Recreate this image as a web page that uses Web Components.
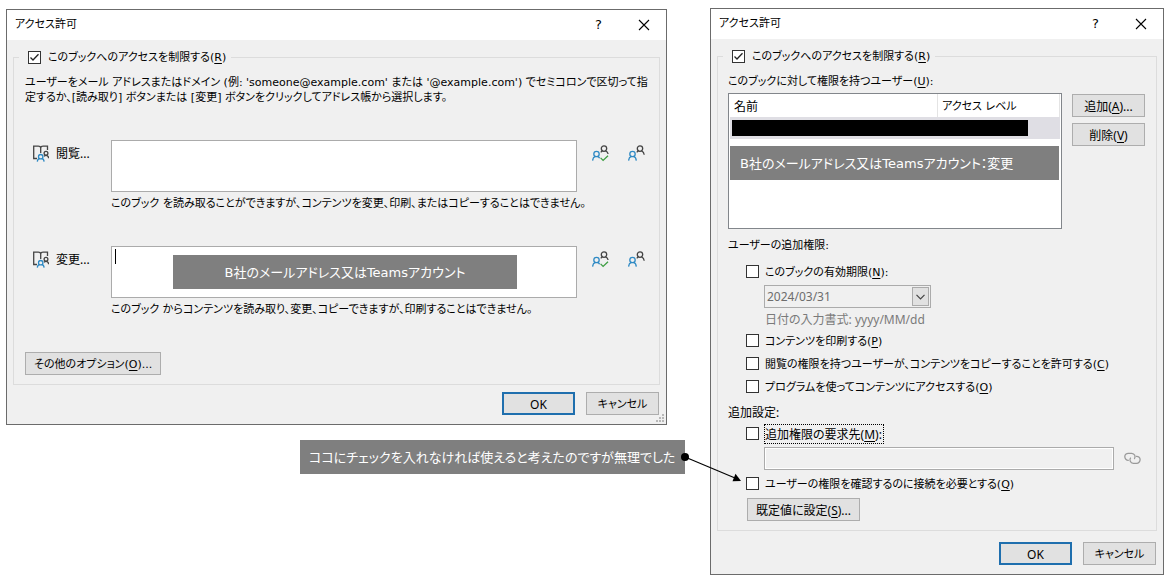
<!DOCTYPE html>
<html lang="ja">
<head>
<meta charset="utf-8">
<title>アクセス許可</title>
<style>
  body {
    margin: 0;
    background: #fff;
    color: #000;
    font: 11px/16px "DejaVu Sans", "Noto Sans CJK JP", sans-serif;
    font-feature-settings: "palt";
  }
</style>
</head>
<body>
<permission-page></permission-page>

<script>
const BASE = `<style>
  * { box-sizing: border-box; }
  u { text-underline-offset: 2px; }
  button, input, textarea, select { font: inherit; font-feature-settings: inherit; color: inherit; margin: 0; border-radius: 0; }
</style>`;

function define(name, markup, setup) {
  const template = document.createElement('template');
  template.innerHTML = BASE + markup;
  customElements.define(name, class extends HTMLElement {
    constructor() {
      super();
      this.attachShadow({ mode: 'open' }).append(template.content.cloneNode(true));
    }
    connectedCallback() {
      if (setup && !this.ready) setup(this, this.shadowRoot);
      this.ready = true;
    }
  });
}

/* Push button */
define('ui-button', `<style>
  :host { display: block; flex: none; }
  :host([primary]) { font: 12px/16px "Noto Sans", "Noto Sans CJK JP", sans-serif; }
  button { display: block; width: 100%; min-width: 73px; height: 23px; padding: 1px 8px 0; border: 1px solid #adadad; background: #e1e1e1; line-height: 21px; white-space: nowrap; text-align: center; }
  :host([primary]) button { border: 2px solid #1f6fae; line-height: 19px; }
</style><button type="button"><slot></slot></button>`);

/* Check box with its label */
define('ui-check', `<style>
  :host { display: flex; align-items: center; height: 23px; }
  :host([slot="legend"]) { height: 18px; }
  input { appearance: none; flex: none; width: 13px; height: 13px; border: 1px solid #333; background: #fff; }
  input:checked { background: #fff url("data:image/svg+xml,%3Csvg xmlns='http://www.w3.org/2000/svg' viewBox='0 0 11 11'%3E%3Cpath d='M1.5 5.5 4 8l5.5-5.7' fill='none' stroke='%23222' stroke-width='1.3'/%3E%3C/svg%3E") center / 11px 11px no-repeat; }
  label { height: 20px; margin-left: 5px; padding-right: 1px; border: 1px dotted transparent; line-height: 20px; white-space: nowrap; }
  :host([focused]) label { border-color: #000; }
  :host([slot="legend"]) label { margin-left: 6px; height: 18px; line-height: 18px; }
</style><input type="checkbox" id="box"><label for="box"><slot></slot></label>`,
(host, root) => { root.querySelector('input').checked = host.hasAttribute('checked'); });

/* Dialog window: title bar, content, footer buttons */
define('ui-dialog', `<style>
  :host { display: block; position: relative; border: 1px solid #6b6b6b; background: #f0f0f0; }
  header { display: flex; height: 30px; padding-left: 8px; background: #fff; }
  h1 { flex: 1; margin: 0; font-size: 11px; font-weight: 400; line-height: 30px; }
  header button { width: 45px; padding: 0; border: 0; background: none; display: flex; align-items: center; justify-content: center; font-size: 13px; line-height: 28px; }
  svg { display: block; }
  main { padding: 8px 6px 0; }
  footer { display: flex; justify-content: flex-end; gap: 11px; padding: 0 7px; margin-top: var(--footer-gap, 7px); padding-bottom: 9px; }
  .grip { display: none; position: absolute; right: 2px; bottom: 2px; }
  :host([resizable]) .grip { display: block; }
</style>
<header><h1></h1>
  <button type="button" aria-label="ヘルプ">?</button>
  <button type="button" aria-label="閉じる"><svg width="12" height="12" viewBox="0 0 12 12"><path d="M1 1l10 10M11 1 1 11" stroke="#000" stroke-width="1.1"/></svg></button>
</header>
<main><slot></slot></main>
<footer><ui-button primary>OK</ui-button><ui-button>キャンセル</ui-button></footer>
<svg class="grip" width="8" height="8" viewBox="0 0 8 8"><path d="M6 0h2v2H6zM3 3h2v2H3zM6 3h2v2H6zM0 6h2v2H0zM3 6h2v2H3zM6 6h2v2H6z" fill="#b8b8b8"/></svg>`,
(host, root) => { root.querySelector('h1').textContent = host.getAttribute('caption'); });

/* Group box whose legend is a check box */
define('ui-group', `<style>
  :host { display: block; }
  fieldset { min-width: 0; margin: 0; border: 1px solid #dcdcdc; padding: var(--top, 9px) 11px 9px var(--side, 11px); }
  legend { margin-left: calc(5px - var(--side, 11px)); padding: 0 3px 0 9px; }
</style><fieldset><legend><slot name="legend"></slot></legend><slot></slot></fieldset>`);

/* Pictograms */
define('ui-icon', `<style>
  :host { display: block; flex: none; }
  svg { display: block; fill: none; stroke-width: 1.3; }
  .k { stroke: #444; } .b { stroke: #2f8ac4; } .g { stroke: #3c9d40; }
</style>`, (host, root) => {
  const shapes = {
    book: ['0 0 16 17', 16, 17, '<path class="k" d="M4 13.500H.7V1.200h4.600Q7.500 1.200 7.700 3V8M7.700 3Q7.900 1.200 10 1.200h4.500V5"/><circle class="k" cx="13" cy="8.200" r="1.900"/><path class="k" d="M11 11.300q2-1.600 3.600-.3 1 .8 1 2.200"/><circle class="b" cx="7.700" cy="11.700" r="2.200"/><path class="b" d="M4.300 16.600q.2-2.700 2.200-3M11.100 16.600q-.2-2.700-2.200-3"/>'],
    people: ['0 0 17 17', 17, 17, '<circle class="k" cx="12" cy="3.600" r="2.700"/><path class="k" d="M8.800 7.400q.7-1 1.700-1.600M13.500 5.800q2.500 1.100 2.700 4"/><circle class="b" cx="4.500" cy="9" r="2.700"/><path class="b" d="M.6 15.600q.2-3.400 2.700-4.300M5.700 11.300q2.400.9 2.600 4.300"/>'],
    verify: ['0 0 17 17', 17, 17, '<circle class="k" cx="12" cy="3.600" r="2.700"/><path class="k" d="M8.800 7.400q.7-1 1.700-1.600M13.500 5.800q2.300.9 2.600 3.200"/><circle class="b" cx="4.500" cy="9" r="2.700"/><path class="b" d="M.6 15.600q.2-3.400 2.700-4.300M5.700 11.300q1.500.7 1.900 1.900"/><path class="g" d="M8.600 12.900l2.500 2.500 4.900-4.600"/>'],
    link: ['0 0 17 13', 17, 13, '<path stroke="#9a9a9a" d="M4.800 8.300H4.300a3.500 3.500 0 0 1 0-7h3.400a3.500 3.500 0 0 1 2.600 5.700M12 4.300h.6a3.500 3.500 0 0 1 0 7H9.300a3.500 3.500 0 0 1-2.600-5.700"/>']
  };
  const [box, w, h, body] = shapes[host.getAttribute('name')];
  root.append(document.createRange().createContextualFragment(`<svg width="${w}" height="${h}" viewBox="${box}" aria-hidden="true">${body}</svg>`));
});

/* Button that shows only a pictogram */
define('ui-icon-button', `<style>
  :host { display: block; flex: none; }
  button { display: block; padding: 0; border: 0; background: none; }
</style><button type="button"><slot></slot></button>`,
(host, root) => { root.querySelector('button').setAttribute('aria-label', host.getAttribute('caption')); });

/* Grey note */
define('side-note', `<style>
  :host { display: block; height: 34px; background: #7f7f7f; color: #fff; font-size: 13px; line-height: 35px; white-space: nowrap; }
</style><slot></slot>`);

/* Address field of one permission */
define('address-field', `<style>
  :host { display: grid; grid-template-columns: 70px minmax(0, 1fr) auto; column-gap: 16px; row-gap: 3px; padding: 0 3px 0 8px; }
  label { display: flex; gap: 7px; margin-top: 5px; height: 17px; font: 12px/18px "Noto Sans", "Noto Sans CJK JP", sans-serif; white-space: nowrap; }
  .box { position: relative; margin-left: -8px; height: 52px; }
  textarea { display: block; width: 100%; height: 52px; padding: 2px 4px; border: 1px solid #ababab; background: #fff; resize: none; outline: 0; }
  .tools { display: flex; gap: 19px; margin: 5px 0 0 -1px; }
  p { grid-column: 2 / 4; height: 16px; margin: 0 0 0 -8px; line-height: 18px; white-space: nowrap; }
  .caret { display: none; position: absolute; left: 4px; top: 3px; width: 1px; height: 15px; background: #000; }
  :host([active]) .caret { display: block; }
  ::slotted(side-note) { position: absolute; left: 62px; right: 60px; top: 9px; text-align: center; }
</style>
<label for="area"><ui-icon name="book"></ui-icon><span></span></label>
<div class="box"><textarea id="area"></textarea><i class="caret"></i><slot name="note"></slot></div>
<div class="tools">
  <ui-icon-button caption="名前の確認"><ui-icon name="verify"></ui-icon></ui-icon-button>
  <ui-icon-button caption="アドレス帳"><ui-icon name="people"></ui-icon></ui-icon-button>
</div>
<p><slot></slot></p>`,
(host, root) => { root.querySelector('label span').textContent = host.getAttribute('caption'); });

/* List of users with access levels */
define('user-list', `<style>
  :host { display: block; position: relative; flex: 1; min-width: 0; height: 136px; border: 1px solid #82868b; background: #fff; }
  table { width: calc(100% - 2px); margin-left: 1px; border-collapse: collapse; table-layout: fixed; }
  th { height: 23px; padding: 2px 4px 0; font-weight: 400; text-align: left; border-right: 1px solid #e4e4e4; }
  th:first-child { width: 63%; font-size: 12px; }
  td { height: 22px; padding: 3px 2px; background: #dfdee4; }
  .mask { width: 91%; height: 16px; background: #000; }
  ::slotted(side-note) { position: absolute; left: 1px; right: 2px; top: 52px; padding-left: 10px; }
</style>
<table><thead><tr><th>名前</th><th>アクセス レベル</th></tr></thead>
<tbody><tr><td colspan="2"><div class="mask"></div></td></tr></tbody></table>
<slot></slot>`);

/* Expiry date drop-down */
define('date-drop', `<style>
  :host { display: block; position: relative; width: 167px; height: 23px; }
  select { appearance: none; display: block; width: 100%; height: 23px; padding: 0 2px; border: 1px solid #ababab; background: #f0f0f0; color: #6d6d6d; opacity: 1; }
  .arrow { position: absolute; right: 2px; top: 2px; width: 17px; height: 19px; border: 1px solid #ababab; background: #e1e1e1; display: flex; align-items: center; justify-content: center; pointer-events: none; }
</style>
<select disabled aria-label="有効期限"><option>2024/03/31</option></select>
<span class="arrow"><svg width="9" height="6" viewBox="0 0 9 6"><path d="M.5.8l4 4 4-4" fill="none" stroke="#444" stroke-width="1.200"/></svg></span>`);

/* The two dialogs and the note between them */
define('permission-page', `<style>
  :host { display: grid; grid-template-columns: minmax(0, 679fr) minmax(0, 454fr); column-gap: 25px; align-items: start; padding: 8px 8px 6px 6px; }
  .left { display: flex; flex-direction: column; padding-top: 1px; }
  .left ui-dialog { margin-right: 18px; }
  .stack { display: flex; flex-direction: column; gap: 35px; align-items: stretch; }
  .intro { margin: 0; height: 30px; line-height: 15px; white-space: nowrap; }
  .stack ui-button { align-self: flex-start; }
  .remark { position: relative; align-self: flex-end; margin-top: 15px; width: 385px; padding-left: 9px; }
  .arrow { position: absolute; left: calc(100% - 5px); top: 12px; z-index: 1; }
  .right { --top: 8px; --side: 10px; --footer-gap: 11px; }
  .users { display: flex; gap: 10px; align-items: flex-start; margin-top: 4px; }
  .actions { display: flex; flex-direction: column; gap: 6px; padding-top: 1px; }
  .line, .extra, .more, .format { height: 16px; line-height: 18px; }
  .line { margin: 0; }
  .options { padding-left: 18px; }
  .indent { padding-left: 18px; }
  .extra { margin: 8px 0 7px; }
  .more { margin: 6px 0 2px; }
  .format { margin: 3px 0 2px; padding-left: 1px; color: #7a7a7a; }
  .roomy { font-family: "Noto Sans", "Noto Sans CJK JP", sans-serif; font-size: 12px; }
  .request { display: flex; align-items: center; gap: 10px; margin: 2px 4px 2px 0; }
  .request input { flex: 1; min-width: 0; height: 23px; border: 1px solid #ababab; background: #f0f0f0; box-shadow: inset 0 0 0 1px #fff; }
  .defaults { display: flex; margin-top: 3px; padding-left: 1px; }
  date-drop { margin-top: 2px; }
</style>
<div class="left">
  <ui-dialog caption="アクセス許可" resizable>
    <ui-group>
      <ui-check slot="legend" checked>このブックへのアクセスを制限する(<u>R</u>)</ui-check>
      <div class="stack">
        <p class="intro">ユーザーをメール アドレスまたはドメイン (例: 'someone@example.com' または '@example.com') でセミコロンで区切って指<br>定するか、[読み取り] ボタンまたは [変更] ボタンをクリックしてアドレス帳から選択します。</p>
        <address-field caption="閲覧...">このブック を読み取ることができますが、コンテンツを変更、印刷、またはコピーすることはできません。</address-field>
        <address-field caption="変更..." active><side-note slot="note">B社のメールアドレス又はTeamsアカウント</side-note>このブック からコンテンツを読み取り、変更、コピーできますが、印刷することはできません。</address-field>
        <ui-button>その他のオプション(<u>O</u>)...</ui-button>
      </div>
    </ui-group>
  </ui-dialog>
  <side-note class="remark">ココにチェックを入れなければ使えると考えたのですが無理でした<svg class="arrow" width="64" height="34" viewBox="0 0 64 34"><circle cx="5" cy="5" r="4"/><path d="M5 5l50 21" stroke="#000" stroke-width="1.200"/><path d="M61 29l-8.500.2 3-7.400z"/></svg></side-note>
</div>
<ui-dialog class="right" caption="アクセス許可">
  <ui-group>
    <ui-check slot="legend" checked>このブックへのアクセスを制限する(<u>R</u>)</ui-check>
    <p class="line">このブックに対して権限を持つユーザー(<u>U</u>):</p>
    <div class="users">
      <user-list><side-note>B社のメールアドレス又はTeamsアカウント：変更</side-note></user-list>
      <div class="actions"><ui-button class="roomy">追加(<u>A</u>)...</ui-button><ui-button class="roomy">削除(<u>V</u>)</ui-button></div>
    </div>
    <p class="extra">ユーザーの追加権限:</p>
    <div class="options">
      <ui-check>このブックの有効期限(<u>N</u>):</ui-check>
      <div class="indent roomy"><date-drop></date-drop><p class="format">日付の入力書式: yyyy/MM/dd</p></div>
      <ui-check>コンテンツを印刷する(<u>P</u>)</ui-check>
      <ui-check>閲覧の権限を持つユーザーが、コンテンツをコピーすることを許可する(<u>C</u>)</ui-check>
      <ui-check>プログラムを使ってコンテンツにアクセスする(<u>O</u>)</ui-check>
    </div>
    <p class="more roomy">追加設定:</p>
    <div class="options">
      <ui-check class="roomy" focused>追加権限の要求先(<u>M</u>):</ui-check>
      <div class="request indent"><input type="text" disabled aria-label="追加権限の要求先"><ui-icon name="link"></ui-icon></div>
      <ui-check>ユーザーの権限を確認するのに接続を必要とする(<u>Q</u>)</ui-check>
      <div class="defaults"><ui-button class="roomy">既定値に設定(<u>S</u>)...</ui-button></div>
    </div>
  </ui-group>
</ui-dialog>`);
</script>
</body>
</html>
